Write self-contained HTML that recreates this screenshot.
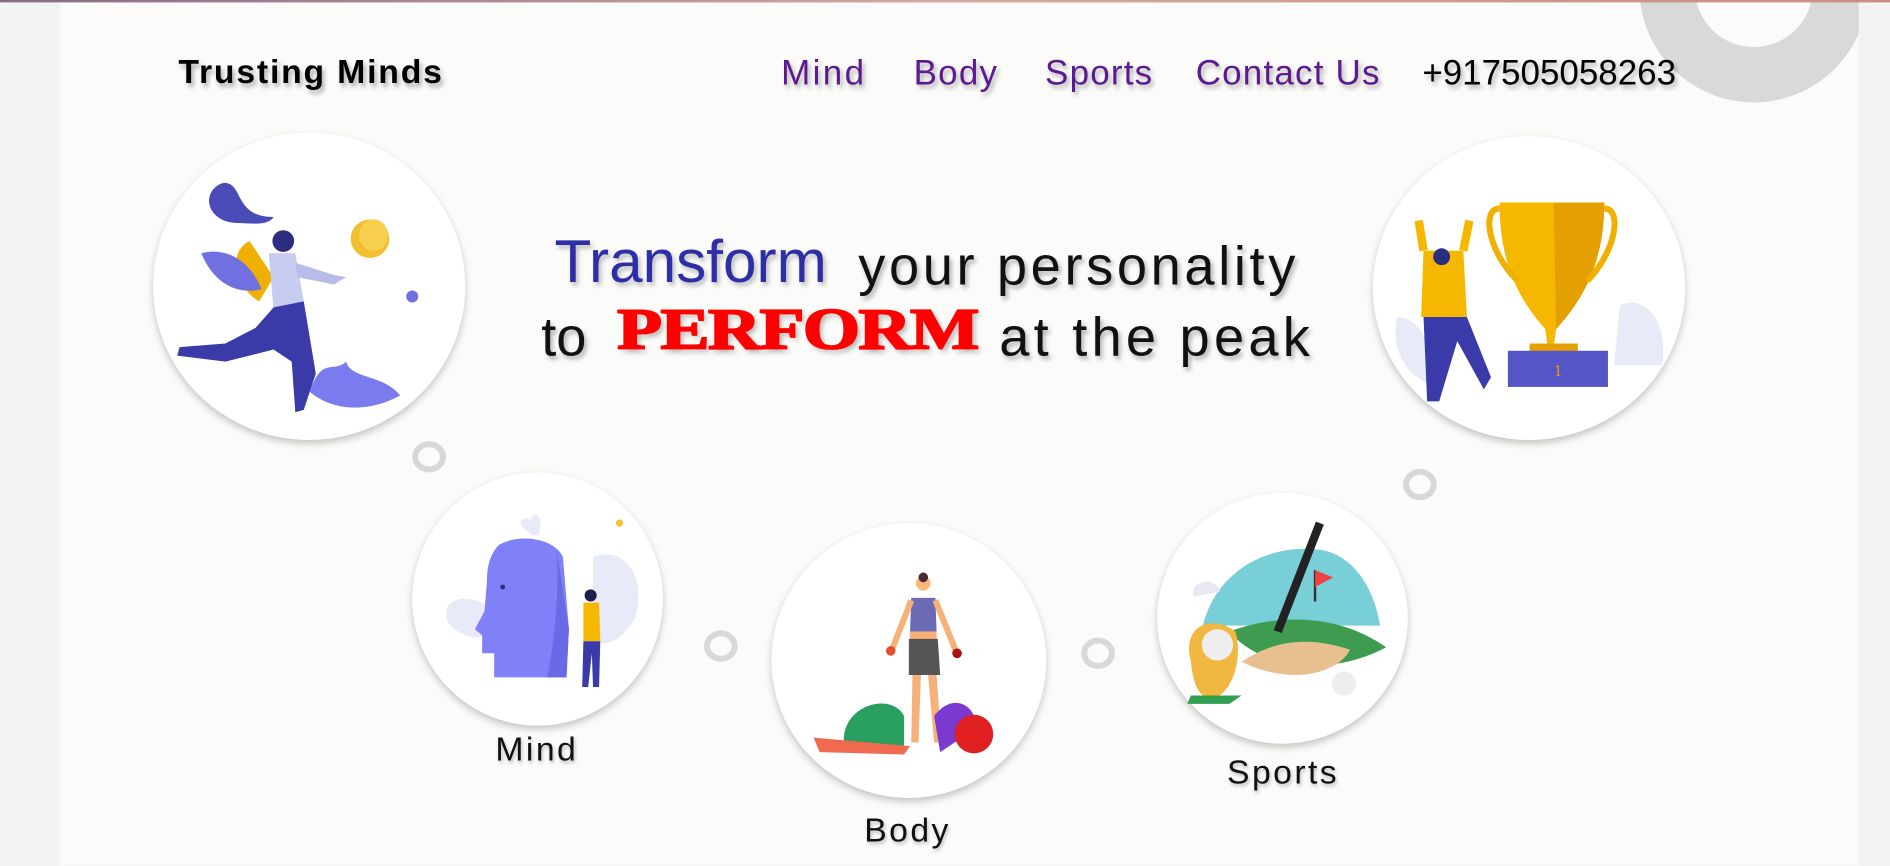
<!DOCTYPE html>
<html><head><meta charset="utf-8"><style>
html,body{margin:0;padding:0;width:1890px;height:866px;overflow:hidden;background:#f3f3f3}
#w{position:absolute;left:0;top:0;width:1568px;height:718px;transform:scale(1.20536);transform-origin:0 0;font-family:"Liberation Sans",sans-serif}
.content{position:absolute;left:50px;top:0;width:1492px;height:718px;background:#fbfbf9;overflow:hidden}
.topline{position:absolute;left:0;top:0;width:1568px;height:2px;background:linear-gradient(90deg,#8a6a8a,#d4a89a,#c89080)}
.ring{position:absolute;border-radius:50%;border:5px solid #d8d8d8;box-sizing:border-box}
.circ{position:absolute;border-radius:50%;background:#fff;box-shadow:0 3px 6px rgba(0,0,0,.22)}
.t{position:absolute;white-space:nowrap;text-shadow:2px 3px 4px rgba(0,0,0,.3)}
.nav{font-size:29px;color:#5b1a8e;top:45px;letter-spacing:1px}
.lbl{font-size:28px;color:#111;letter-spacing:2px;text-shadow:1px 2px 3px rgba(0,0,0,.25)}
svg{position:absolute;overflow:visible}
</style></head><body><div id="w">
<div class="content">
  <div style="position:absolute;left:1310px;top:-105px;width:190px;height:190px;border-radius:50%;border:46px solid #d9d9d9;box-sizing:border-box"></div>
</div>
<div class="topline"></div>

<div class="t" style="left:148px;top:44px;font-size:28px;font-weight:bold;color:#000;letter-spacing:1.5px">Trusting Minds</div>
<div class="t nav" style="left:648px;letter-spacing:2px">Mind</div>
<div class="t nav" style="left:758px">Body</div>
<div class="t nav" style="left:867px">Sports</div>
<div class="t nav" style="left:992px">Contact Us</div>
<div class="t nav" style="left:1180px;color:#000;letter-spacing:0">+917505058263</div>

<!-- top left circle -->
<div class="circ" style="left:127px;top:110px;width:259px;height:255px"></div>
<svg style="left:127px;top:110px" width="259" height="255">
 <path d="M52 45 C40 55 48 75 70 75 C80 75 95 78 100 70 C80 70 75 60 70 50 C65 40 58 40 52 45Z" fill="#4b4bb8"/>
 <path d="M80 90 C60 100 70 130 88 140 L100 120Z" fill="#f0b000"/>
 <path d="M40 100 C60 95 80 105 90 130 C70 135 50 125 40 100Z" fill="#7070e0"/>
 <circle cx="108" cy="90" r="9" fill="#2d2d80"/>
 <path d="M96 100 L118 100 L125 140 L100 148Z" fill="#c8ccf0"/>
 <path d="M118 108 L150 118 L160 120 L150 126 L120 120Z" fill="#b8bce8"/>
 <path d="M100 145 L125 140 L135 200 L125 230 L118 232 L115 190 L100 180 L60 190 L20 185 L22 178 L60 175 L85 162Z" fill="#3a3aa8"/>
 <ellipse cx="180" cy="88" rx="16" ry="16" fill="#f0c030"/><ellipse cx="183" cy="85" rx="12" ry="13" fill="#f8d050"/>
 <path d="M130 215 C140 185 150 200 160 190 C165 205 190 200 205 218 C180 232 150 232 130 215Z" fill="#7b7bf0"/>
 <circle cx="215" cy="136" r="5" fill="#7070e0"/>
</svg>

<!-- top right circle -->
<div class="circ" style="left:1139px;top:113px;width:259px;height:252px"></div>
<svg style="left:1139px;top:113px" width="259" height="252">
 <path d="M205 140 C230 130 245 160 240 190 L200 190Z" fill="#e8eaf8"/>
 <path d="M20 150 C40 150 55 180 45 205 C25 195 15 175 20 150Z" fill="#e8eaf8"/>
 <path d="M105 55 L192 55 C192 110 170 140 152 160 L150 175 L145 175 L143 160 C125 140 105 110 105 55Z" fill="#f5b700"/>
 <path d="M150 55 L192 55 C192 110 170 140 152 160Z" fill="#e4a000"/>
 <path d="M105 60 C90 60 95 95 120 120" stroke="#f0b000" stroke-width="5" fill="none"/>
 <path d="M192 60 C207 60 202 95 178 120" stroke="#f0b000" stroke-width="5" fill="none"/>
 <rect x="130" y="172" width="40" height="8" fill="#e4a000"/>
 <rect x="112" y="178" width="83" height="30" fill="#5555c8"/>
 <text x="150" y="199" font-size="14" fill="#e4a000" font-family="Liberation Serif">1</text>
 <path d="M42 95 L75 95 L78 150 L40 150Z" fill="#f5b700"/>
 <path d="M42 95 L38 70 M75 95 L80 70" stroke="#f5b700" stroke-width="7"/>
 <circle cx="57" cy="100" r="7" fill="#2d2d80"/>
 <path d="M42 150 L78 150 L98 200 L92 210 L70 170 L55 220 L45 220Z" fill="#3a3aa8"/>
</svg>

<div class="t" style="left:460px;top:188px;font-size:50px;color:#2e2ea6;text-shadow:2px 3px 4px rgba(0,0,0,.25)">Transform</div>
<div class="t" style="left:712px;top:195px;font-size:45px;color:#111;letter-spacing:3px">your personality</div>
<div class="t" style="left:449px;top:254px;font-size:45px;color:#111">to</div>
<div class="t" style="left:512px;top:246px;font-size:48px;color:#ff0000;font-family:'Liberation Serif',serif;font-weight:bold;letter-spacing:-1px;transform:scaleX(1.27);transform-origin:0 0;-webkit-text-stroke:1.5px #f00">PERFORM</div>
<div class="t" style="left:829px;top:254px;font-size:45px;color:#111;letter-spacing:3.5px">at the peak</div>

<div class="ring" style="left:342px;top:366px;width:28px;height:26px"></div>
<div class="ring" style="left:1164px;top:389px;width:28px;height:26px"></div>
<div class="ring" style="left:584px;top:523px;width:28px;height:26px"></div>
<div class="ring" style="left:897px;top:529px;width:28px;height:26px"></div>

<!-- Mind -->
<div class="circ" style="left:342px;top:392px;width:208px;height:210px"></div>
<svg style="left:342px;top:392px" width="208" height="210">
 <path d="M30 110 C40 100 60 105 70 118 C70 135 55 140 45 135 C30 130 25 120 30 110Z" fill="#e8eaf8"/>
 <path d="M150 70 C175 60 195 85 185 120 C175 140 160 145 150 140Z" fill="#e8eaf8"/>
 <path d="M100 52 C80 40 95 35 98 40 C100 30 110 35 105 52Z" fill="#e8eaf8"/>
 <path d="M72 60 C90 50 118 55 125 70 L130 130 L128 170 L68 170 L68 150 L58 150 L58 135 L52 130 L60 115 L62 90 C62 75 66 66 72 60Z" fill="#8080f8"/>
 <path d="M120 65 L130 130 L128 170 L112 170 C118 140 122 100 120 65Z" fill="#6a6ae8"/>
 <circle cx="75" cy="95" r="2" fill="#2d2d80"/>
 <path d="M142 108 L155 108 L156 140 L142 140Z" fill="#f5b700"/>
 <circle cx="148" cy="102" r="5" fill="#1d1d50"/>
 <path d="M142 140 L156 140 L155 178 L150 178 L149 150 L146 178 L141 178Z" fill="#3a3aa8"/>
 <circle cx="172" cy="42" r="3" fill="#f5c030"/>
</svg>
<div class="t lbl" style="left:411px;top:606px">Mind</div>

<!-- Body -->
<div class="circ" style="left:640px;top:434px;width:228px;height:228px"></div>
<svg style="left:640px;top:434px" width="228" height="228">
 <circle cx="126" cy="50" r="6" fill="#fbb67a"/><circle cx="126" cy="45" r="4" fill="#4a2a3a"/>
 <path d="M116 62 L136 62 L137 90 L115 90Z" fill="#6b6bb5"/>
 <path d="M116 64 L100 105 M136 64 L153 106" stroke="#f6b078" stroke-width="5"/>
 <path d="M115 90 L137 90 L138 126 L114 126Z" fill="#f6b078"/>
 <path d="M114 96 L138 96 L140 126 L114 126Z" fill="#555"/>
 <path d="M117 126 L124 126 L122 182 L116 182Z M130 126 L137 126 L141 182 L135 182Z" fill="#f6b078"/>
 <path d="M60 180 C60 150 100 140 110 160 L110 190 L60 190Z" fill="#2aa060"/>
 <path d="M35 178 L115 185 L110 192 L40 190Z" fill="#f06a50"/>
 <path d="M135 160 C150 140 170 150 170 170 L140 190Z" fill="#7a3ad0"/>
 <circle cx="168" cy="175" r="16" fill="#e02020"/>
 <circle cx="99" cy="106" r="4" fill="#e05030"/><circle cx="154" cy="108" r="4" fill="#b01010"/>
</svg>
<div class="t lbl" style="left:717px;top:673px">Body</div>

<!-- Sports -->
<div class="circ" style="left:960px;top:409px;width:208px;height:208px"></div>
<svg style="left:960px;top:409px" width="208" height="208">
 <path d="M38 110 C50 60 100 40 140 48 C165 55 180 80 185 110Z" fill="#78cfd8"/>
 <path d="M60 115 C100 100 150 100 190 128 C150 150 90 150 60 115Z" fill="#3e9b50"/>
 <path d="M70 140 C100 120 130 120 160 130 C150 150 110 160 70 140Z" fill="#e8c090"/>
 <line x1="135" y1="25" x2="100" y2="115" stroke="#222" stroke-width="7"/>
 <path d="M131 64 L131 90" stroke="#333" stroke-width="2"/><path d="M131 64 L146 70 L131 78Z" fill="#f04040"/>
 <path d="M28 140 C20 110 45 100 65 115 C72 140 60 170 45 170 C35 170 30 160 28 140Z" fill="#f0b840"/>
 <circle cx="50" cy="126" r="13" fill="#eee"/>
 <path d="M28 168 L70 168 L60 175 L25 175Z" fill="#30a050"/>
 <circle cx="155" cy="158" r="10" fill="#eee"/>
 <path d="M30 80 C35 70 50 72 52 82 L30 86Z" fill="#e8e8f0"/>
</svg>
<div class="t lbl" style="left:1018px;top:625px">Sports</div>
</div></body></html>
